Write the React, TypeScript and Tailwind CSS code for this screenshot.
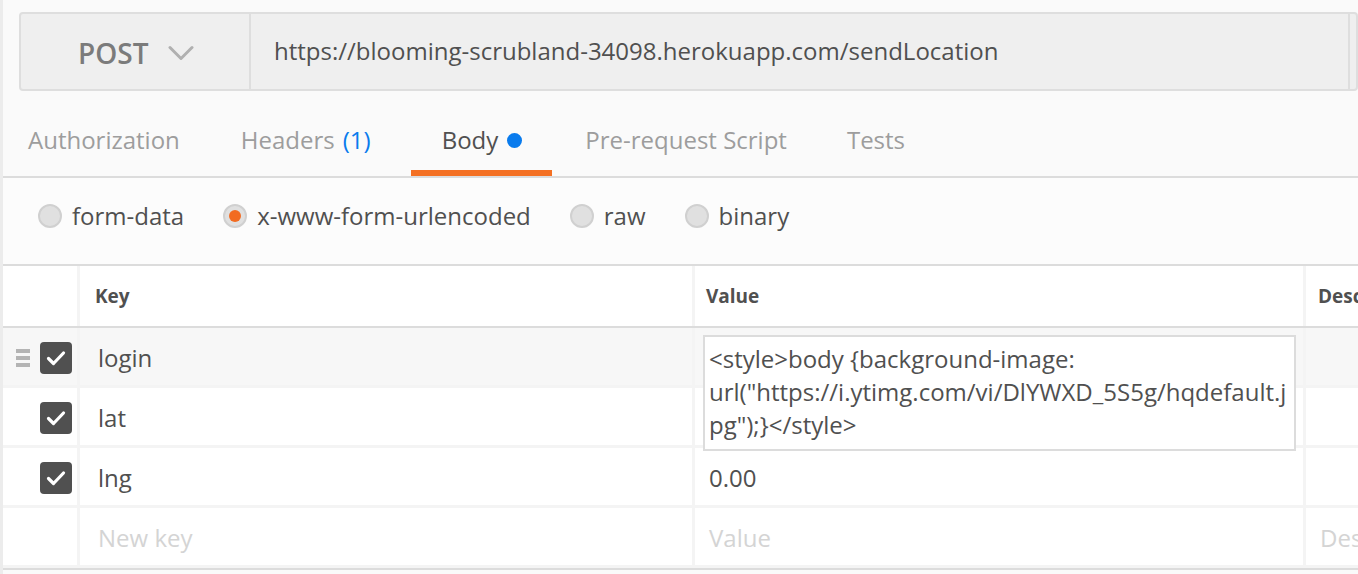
const font = { fontFamily: '"Open Sans", "Liberation Sans", sans-serif' };

function Radio({ label, checked }: { label: string; checked?: boolean }) {
  return (
    <div className="mr-[39px] flex items-center">
      <span className="flex h-[24px] w-[24px] items-center justify-center rounded-full border-2 border-[#d0d0d0] bg-[#e0e0e0]">
        {checked && <span className="h-[12px] w-[12px] rounded-full bg-[#f26b21]" />}
      </span>
      <span className="ml-[10px] text-[24px] text-[#505050]">{label}</span>
    </div>
  );
}

function Check() {
  return (
    <span className="flex h-[32px] w-[32px] items-center justify-center rounded-[4px] bg-[#505050]">
      <svg width="20" height="16" viewBox="0 0 20 16" fill="none">
        <path d="M2.5 8.5l5 5L17.5 3" stroke="#fff" strokeWidth="3.2" strokeLinecap="round" strokeLinejoin="round" />
      </svg>
    </span>
  );
}

function Row({
  k,
  v,
  hover,
  checked = true,
  placeholder,
  children,
}: {
  k: string;
  v?: string;
  hover?: boolean;
  checked?: boolean;
  placeholder?: boolean;
  children?: React.ReactNode;
}) {
  const text = placeholder ? 'text-[#d4d4d4]' : 'text-[#505050]';
  return (
    <div className={`flex h-[60px] border-b-[3px] border-[#f4f4f4] ${hover ? 'bg-[#f7f7f7]' : 'bg-white'}`}>
      <div className="flex w-[74px] shrink-0 items-center pl-[13px] pt-[3px]">
        <span className="mr-[10px] flex w-[14px] flex-col gap-[3px]">
          {hover && (
            <>
              <span className="h-[4px] bg-[#b4b4b4]" />
              <span className="h-[4px] bg-[#b4b4b4]" />
              <span className="h-[4px] bg-[#b4b4b4]" />
            </>
          )}
        </span>
        {checked && <Check />}
      </div>
      <div className={`flex w-[615px] shrink-0 items-center border-l-[3px] border-[#f4f4f4] pl-[18px] pt-[3px] text-[24px] ${text}`}>
        {k}
      </div>
      <div className={`relative flex w-[611px] shrink-0 items-center border-l-[3px] border-[#f4f4f4] pl-[14px] pt-[3px] text-[24px] ${text}`}>
        {v}
        {children}
      </div>
      <div className={`flex flex-1 items-center border-l-[3px] border-[#f4f4f4] pl-[14px] pt-[3px] text-[24px] ${text}`}>
        {placeholder ? 'Description' : ''}
      </div>
    </div>
  );
}

export default function App() {
  return (
    <div className="h-[574px] w-[1358px] overflow-hidden border-l-[3px] border-[#ececec] bg-[#fafafa]" style={font}>
      {/* request line */}
      <div className="pl-[16px] pt-[12px]">
        <div className="flex h-[79px] rounded-[4px] border-2 border-[#dedede] bg-[#efefef]">
          <div className="flex w-[230px] shrink-0 items-center border-r-2 border-[#dedede] pl-[57px] pt-[2px]">
            <span className="text-[28px] font-semibold text-[#7b7b7b]">POST</span>
            <svg className="ml-[20px]" width="26" height="16" viewBox="0 0 26 16" fill="none">
              <path d="M2 2.5l11 11 11-11" stroke="#b0b0b0" strokeWidth="3" strokeLinecap="round" strokeLinejoin="round" />
            </svg>
          </div>
          <div className="flex flex-1 items-center border-r-2 border-[#dedede] pb-[2px] pl-[23px] text-[24px] text-[#505050]">
            https://blooming-scrubland-34098.herokuapp.com/sendLocation
          </div>
          <div className="w-[6px]" />
        </div>
      </div>

      {/* tabs */}
      <div className="mt-[8px] flex h-[79px] items-end border-b-2 border-[#dcdcdc] text-[24px]">
        <div className="flex h-full items-center pl-[25px] pr-[30px] pt-[5px] text-[#9d9d9d]">Authorization</div>
        <div className="flex h-full items-center pl-[31px] pr-[40px] pt-[5px] text-[#9d9d9d]">
          Headers <span className="ml-[8px] text-[#097bed]">(1)</span>
        </div>
        <div className="flex h-full items-center border-b-[6px] border-[#f47023] pl-[31px] pr-[30px] pt-[11px] text-[#505050]">
          Body
          <span className="ml-[9px] h-[15px] w-[15px] rounded-full bg-[#097bed]" />
        </div>
        <div className="flex h-full items-center pl-[33px] pr-[30px] pt-[5px] text-[#9d9d9d]">Pre-request Script</div>
        <div className="flex h-full items-center pl-[30px] pr-[30px] pt-[5px] text-[#9d9d9d]">Tests</div>
      </div>

      {/* body types */}
      <div className="flex h-[88px] items-center border-b-2 border-[#dcdcdc] bg-[#fcfcfc] pb-[10px] pl-[35px]">
        <Radio label="form-data" />
        <Radio label="x-www-form-urlencoded" checked />
        <Radio label="raw" />
        <Radio label="binary" />
      </div>

      {/* table */}
      <div className="bg-white">
        <div className="flex h-[62px] border-b-2 border-[#dcdcdc] bg-white text-[19px] font-bold text-[#505050]">
          <div className="w-[74px] shrink-0" />
          <div className="flex w-[615px] shrink-0 items-center border-l-[3px] border-[#f4f4f4] pl-[15px]">Key</div>
          <div className="flex w-[611px] shrink-0 items-center border-l-[3px] border-[#f4f4f4] pl-[11px]">Value</div>
          <div className="flex flex-1 items-center border-l-[3px] border-[#f4f4f4] pl-[12px]">Description</div>
        </div>
        <Row k="login" hover>
          <div className="absolute left-[8px] top-[7px] z-10 h-[116px] w-[593px] border-2 border-[#dcdcdc] bg-white px-[4px] pt-[5px] text-[24px] leading-[33px] text-[#505050]">
            <div>&lt;style&gt;body {'{'}background-image:</div>
            <div>url("https://i.ytimg.com/vi/DlYWXD_5S5g/hqdefault.j</div>
            <div>pg");{'}'}&lt;/style&gt;</div>
          </div>
        </Row>
        <Row k="lat" />
        <Row k="lng" v="0.00" />
        <Row k="New key" v="Value" placeholder checked={false} />
        <div className="h-[2px] bg-[#dcdcdc]" />
      </div>
    </div>
  );
}
